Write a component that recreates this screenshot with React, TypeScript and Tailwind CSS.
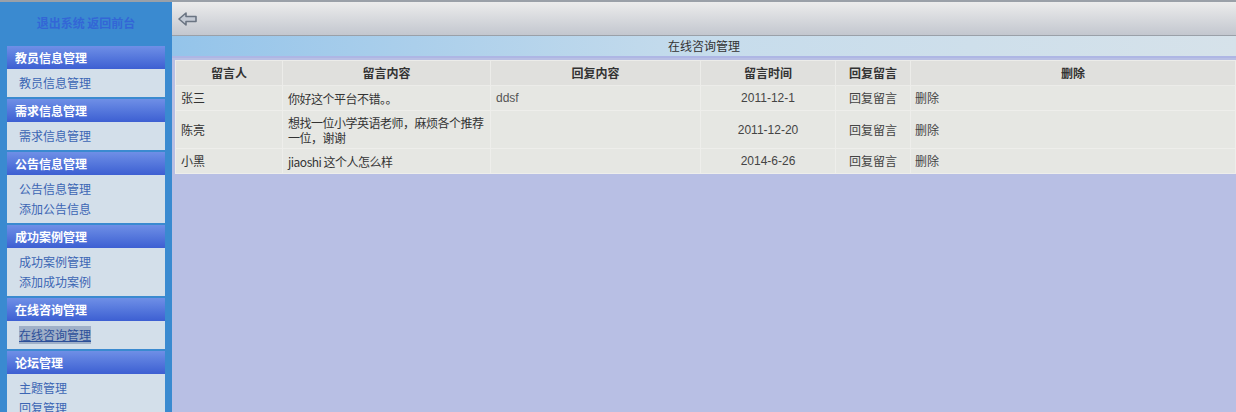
import React from 'react';

const sections = [
  { title: '教员信息管理', items: ['教员信息管理'] },
  { title: '需求信息管理', items: ['需求信息管理'] },
  { title: '公告信息管理', items: ['公告信息管理', '添加公告信息'] },
  { title: '成功案例管理', items: ['成功案例管理', '添加成功案例'] },
  { title: '在线咨询管理', items: ['在线咨询管理'], active: '在线咨询管理' },
  { title: '论坛管理', items: ['主题管理', '回复管理'] },
];

const rows = [
  { name: '张三', content: '你好这个平台不错。。', reply: 'ddsf', date: '2011-12-1', h: 'h-[25px]' },
  { name: '陈亮', content: '想找一位小学英语老师，麻烦各个推荐一位，谢谢', reply: '', date: '2011-12-20', h: 'h-[38px]' },
  { name: '小黑', content: 'jiaoshi 这个人怎么样', reply: '', date: '2014-6-26', h: 'h-[25px]' },
];

const App: React.FC = () => {
  return (
    <div className="flex w-[1236px] h-[412px] overflow-hidden bg-[#b8bfe4] text-[12px] font-['Noto_Sans_CJK_SC','Liberation_Sans',sans-serif]">
      {/* Sidebar */}
      <div className="w-[172px] shrink-0 bg-[#3a8ad0] border-t-2 border-[#9aa0a8] px-[7px]">
        <div className="h-[42px] flex items-center justify-center text-[#3366d6] font-bold">
          退出系统 返回前台
        </div>
        {sections.map((s) => (
          <div key={s.title} className="mt-[2px]">
            <div className="h-[23px] flex items-center pl-[8px] text-white font-bold bg-gradient-to-b from-[#6f8fe6] to-[#3d5fd2]">
              {s.title}
            </div>
            <div className="bg-[#d3dfea] py-[4px] pl-[12px]">
              {s.items.map((it) => (
                <div key={it} className="h-[20px] flex items-center text-[#3c66b4]">
                  <span className={it === s.active ? 'bg-[#9fb0c8] text-[#2c4f99] underline' : ''}>{it}</span>
                </div>
              ))}
            </div>
          </div>
        ))}
      </div>

      {/* Main */}
      <div className="flex-1 flex flex-col">
        <div className="h-[36px] border-t-2 border-b border-[#9aa0a8] bg-gradient-to-b from-[#ececec] to-[#c3c7cf] flex items-center pl-[6px]">
          <svg width="20" height="14" viewBox="0 0 20 14">
            <path d="M1 7 L8 1 L8 4.5 L18 4.5 L18 9.5 L8 9.5 L8 13 Z" fill="#c4cad4" stroke="#6a7482" strokeWidth="1.6" strokeLinejoin="round" />
          </svg>
        </div>
        <div className="h-[22px] bg-gradient-to-r from-[#94c4ea] via-[#c6dcec] to-[#d6e2ea] flex items-center justify-center text-[#333] border-b-2 border-[#aeb6e4]">
          在线咨询管理
        </div>
        <div className="pl-[3px] pt-[2px]">
          <table className="w-full border-collapse text-[#333]">
            <thead>
              <tr className="h-[25px] bg-[#e0e0dd] font-bold">
                <th className="w-[107px] border border-[#ecece9]">留言人</th>
                <th className="w-[208px] border border-[#ecece9]">留言内容</th>
                <th className="w-[210px] border border-[#ecece9]">回复内容</th>
                <th className="w-[135px] border border-[#ecece9]">留言时间</th>
                <th className="w-[75px] border border-[#ecece9]">回复留言</th>
                <th className="border border-[#ecece9]">删除</th>
              </tr>
            </thead>
            <tbody>
              {rows.map((r) => (
                <tr key={r.name} className={`${r.h} bg-[#e6e7e3]`}>
                  <td className="border border-[#eeeeeb] pl-[5px]">{r.name}</td>
                  <td className="border border-[#eeeeeb] pl-[5px] pr-[2px] leading-[15px] tracking-[-0.5px]">{r.content}</td>
                  <td className="border border-[#eeeeeb] pl-[5px] text-[#555] font-['Liberation_Sans',sans-serif]">{r.reply}</td>
                  <td className="border border-[#eeeeeb] text-center text-[#444] font-['Liberation_Sans',sans-serif]">{r.date}</td>
                  <td className="border border-[#eeeeeb] text-center text-[#444]">回复留言</td>
                  <td className="border border-[#eeeeeb] pl-[4px] text-[#444]">删除</td>
                </tr>
              ))}
            </tbody>
          </table>
        </div>
      </div>
    </div>
  );
};

export default App;
